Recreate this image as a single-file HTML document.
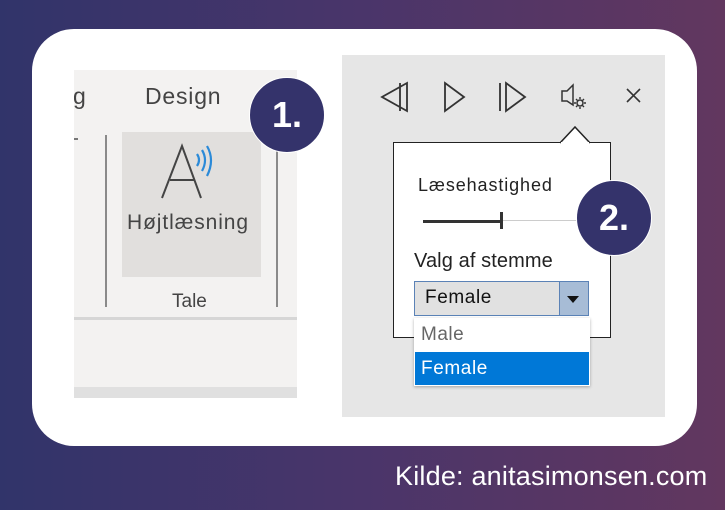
<!DOCTYPE html>
<html><head><meta charset="utf-8"><style>
*{margin:0;padding:0;box-sizing:border-box}
body{width:725px;height:510px;overflow:hidden;position:relative;background:linear-gradient(90deg,#31346a 0%,#4a356a 50%,#62375f 100%);font-family:"Liberation Sans","DejaVu Sans",sans-serif}
.a{position:absolute}
.card{left:32px;top:29px;width:665px;height:417px;background:#fff;border-radius:42px}
.lp{left:74px;top:70px;width:223px;height:328px;background:#f3f2f1;overflow:hidden}
.rp{left:342px;top:55px;width:323px;height:362px;background:#e6e6e6}
.t{color:#444;white-space:nowrap}
.badge{width:76px;height:76px;border-radius:50%;background:#34336b;border:1.5px solid #fff;color:#fff;font-weight:bold;font-size:36px;text-align:center;line-height:74px}
</style></head><body>
<div class="a card"></div>
<div class="a lp">
  <div class="a t" style="left:-1px;top:13px;font-size:23px">g</div>
  <div class="a t" style="left:71px;top:13px;font-size:23px;letter-spacing:0.8px">Design</div>
  <div class="a" style="left:31px;top:65px;width:1.5px;height:172px;background:#8a8a8a"></div>
  <div class="a" style="left:202px;top:65px;width:1.5px;height:172px;background:#8a8a8a"></div>
  <div class="a" style="left:48px;top:62px;width:139px;height:145px;background:#e1dfdd"></div>
  <div class="a" style="left:0;top:68px;width:4px;height:2px;background:#777"></div>
  <svg class="a" style="left:84px;top:72px" width="64" height="58"><path d="M4 56 L24 4 L43 56 M12 38 H36" stroke="#444" stroke-width="2" fill="none"/><path d="M39 12 Q43 18 39 24 M44 8 Q50 18 44 29 M49 4 Q57 18 49 34" stroke="#2b8ad8" stroke-width="2.2" fill="none"/></svg>
  <div class="a t" style="left:53px;top:141px;font-size:21px;letter-spacing:0.9px">Højtlæsning</div>
  <div class="a t" style="left:98px;top:221px;font-size:19px">Tale</div>
  <div class="a" style="left:0;top:247px;width:223px;height:3px;background:#d6d6d6"></div>
  <div class="a" style="left:0;top:317px;width:223px;height:11px;background:#e0e0e0"></div>
</div>
<div class="a badge" style="left:249px;top:77px">1.</div>
<div class="a rp"></div>
<svg class="a" style="left:375px;top:80px" width="275" height="34" fill="none" stroke="#333" stroke-width="1.8">
  <path d="M32 3 L7 17 L32 31 Z M25 3 V31"/>
  <path d="M70 3 L89 17 L70 31 Z"/>
  <path d="M125 3 V31 M131 3 L150 17 L131 31 Z"/>
  <path d="M187 11 H192 L198 5 V25 L192 21 H187 Z" stroke-width="1.5"/>
  <circle cx="205" cy="23" r="3" stroke-width="1.5"/>
  <path d="M205 17 V19 M205 27 V29 M199 23 H201 M209 23 H211 M201 19 L202.5 20.5 M207.5 25.5 L209 27 M209 19 L207.5 20.5 M202.5 25.5 L201 27" stroke-width="1.4"/>
  <path d="M252 9 L265 22 M265 9 L252 22" stroke-width="1.6"/>
</svg>
<div class="a" style="left:393px;top:142px;width:218px;height:196px;background:#fff;border:1.5px solid #222"></div>
<svg class="a" style="left:560px;top:124px" width="32" height="20"><path d="M0 19 L15 3 L30 19" fill="#fff" stroke="#222" stroke-width="1.5"/><rect x="1" y="18" width="28" height="4" fill="#fff"/></svg>
<div class="a t" style="left:418px;top:175px;font-size:18px;color:#222;letter-spacing:0.9px">Læsehastighed</div>
<div class="a" style="left:423px;top:220px;width:78px;height:2.5px;background:#333"></div>
<div class="a" style="left:500px;top:212px;width:2.5px;height:17px;background:#333"></div>
<div class="a" style="left:503px;top:220px;width:75px;height:1px;background:#ccc"></div>
<div class="a t" style="left:414px;top:250px;font-size:20px;color:#222;letter-spacing:0.1px">Valg af stemme</div>
<div class="a" style="left:414px;top:281px;width:175px;height:35px;background:#e1e1e1;border:1.5px solid #5b82b6"></div>
<div class="a t" style="left:425px;top:287px;font-size:19px;color:#111;letter-spacing:0.6px">Female</div>
<div class="a" style="left:559px;top:282px;width:29px;height:33px;background:#a7bcd6;border-left:1px solid #5b82b6"></div>
<svg class="a" style="left:566px;top:294px" width="14" height="10"><path d="M1 2 H13 L7 9 Z" fill="#111"/></svg>
<div class="a" style="left:414px;top:318px;width:176px;height:68px;background:#fff;box-shadow:0 1px 3px rgba(0,0,0,.3)"></div>
<div class="a t" style="left:421px;top:324px;font-size:19px;color:#666;letter-spacing:0.5px">Male</div>
<div class="a" style="left:415px;top:352px;width:174px;height:33px;background:#0078d7"></div>
<div class="a t" style="left:421px;top:358px;font-size:19px;color:#fff;letter-spacing:0.6px">Female</div>
<div class="a badge" style="left:576px;top:180px">2.</div>
<div class="a" style="left:395px;top:461px;font-size:27px;color:#fff;white-space:nowrap;letter-spacing:0.2px">Kilde: anitasimonsen.com</div>
</body></html>
